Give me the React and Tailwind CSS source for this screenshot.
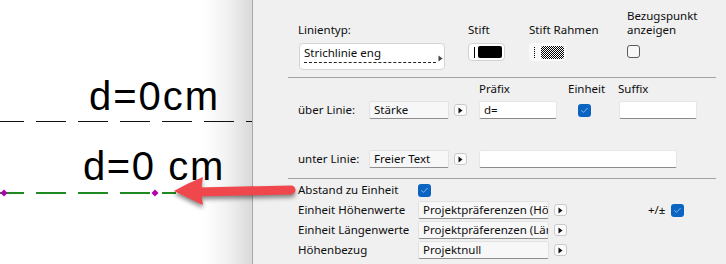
import { Check } from "lucide-react";

const ui = { fontFamily: '"Noto Sans", "Open Sans", sans-serif' };
const cad = { fontFamily: '"Liberation Sans", Arial, sans-serif' };

function ArrowBtn() {
  return (
    <div className="w-[13px] h-[12px] shrink-0 rounded-[3px] border border-[#c9c9c9] bg-[#fbfbfb] flex items-center justify-center">
      <svg width="5" height="7" viewBox="0 0 5 7">
        <path d="M0.5 0.5 L4.5 3.5 L0.5 6.5 Z" fill="#111" />
      </svg>
    </div>
  );
}

function CheckOn() {
  return (
    <div className="w-[13px] h-[13px] shrink-0 rounded-[3px] bg-[#0a64c2] flex items-center justify-center">
      <Check size={9} strokeWidth={1.6} color="#dbe9f8" />
    </div>
  );
}

function CheckOff() {
  return <div className="w-[13px] h-[13px] rounded-[3px] border border-[#5a5a5a] bg-[#f7f7f7]" />;
}

function Field({ text, w = "w-[80px]" }) {
  return (
    <div
      className={`${w} h-[18px] shrink-0 overflow-hidden whitespace-nowrap rounded-[2px] border border-[#e2e2e2] border-b-[#8d8d8d] bg-[#f7f7f7] pl-[4px] leading-[16px]`}
    >
      {text}
    </div>
  );
}

function Input({ text = "", w }) {
  return (
    <div
      className={`${w} h-[18px] shrink-0 rounded-[2px] border border-[#e6e6e6] border-b-[#8a8a8a] bg-white pl-[4px] leading-[16px]`}
    >
      {text}
    </div>
  );
}

export default function App() {
  return (
    <div className="relative flex w-[726px] h-[264px] overflow-hidden bg-white">
      {/* drawing canvas */}
      <div className="relative w-[252px] h-full shrink-0 bg-white" style={cad}>
        <div className="absolute right-0 top-0 h-full w-[48px] bg-linear-to-r from-white via-[#f1f1f1] to-[#d9d9d9]" />
        <svg className="absolute inset-0" width="252" height="264">
          <line x1="-6" y1="121.5" x2="252" y2="121.5" stroke="#111" strokeWidth="1" strokeDasharray="30 12" />
          <line x1="-6" y1="193" x2="176" y2="193" stroke="#1f8a1f" strokeWidth="2" strokeDasharray="30 12" />
          <path d="M4 189.5 L7.5 193 L4 196.5 L0.5 193 Z" fill="#b000b0" />
          <path d="M155 189.5 L158.5 193 L155 196.5 L151.5 193 Z" fill="#b000b0" />
        </svg>
        <div className="absolute left-[89px] top-[76px] text-[40px] leading-[40px] tracking-[2px] text-black">
          d=0cm
        </div>
        <div className="absolute left-[83px] top-[146px] text-[40px] leading-[40px] tracking-[1.6px] whitespace-pre text-black">
          d=0 cm
        </div>
      </div>

      {/* dialog panel */}
      <div className="flex-1 h-full border-l border-[#a9a9a9] bg-[#f0f0f0] text-[11.5px] text-[#0d0d0d]" style={ui}>
        {/* line type */}
        <div className="h-[77px] pl-[45px] pt-[9px]">
          <div className="grid grid-cols-[170px_61px_98px_auto] items-end leading-[14px]">
            <div>Linientyp:</div>
            <div>Stift</div>
            <div>Stift Rahmen</div>
            <div>
              Bezugspunkt
              <br />
              anzeigen
            </div>
          </div>
          <div className="mt-[6px] grid grid-cols-[170px_61px_98px_auto] items-start">
            <div className="ml-[1px] w-[146px] h-[27px] rounded-[4px] border border-[#d4d4d4] bg-white relative">
              <div className="pl-[4px] pt-[1px] leading-[16px]">Strichlinie eng</div>
              <div className="ml-[4px] mt-[1px] w-[132px] border-t border-dashed border-[#222]" />
              <svg className="absolute right-[1px] top-[11px]" width="5" height="7" viewBox="0 0 5 7">
                <path d="M0.5 0.5 L4.5 3.5 L0.5 6.5 Z" fill="#444" />
              </svg>
            </div>
            <div className="w-[37px] h-[18px] rounded-[4px] border border-[#d2d2d2] bg-white flex items-center pl-[5px] gap-[3px]">
              <div className="w-px h-[11px] bg-black" />
              <div className="w-[24px] h-[12px] rounded-[2px] bg-black" />
            </div>
            <div className="w-[37px] h-[18px] rounded-[4px] bg-[#f9f9f9] flex items-center pl-[5px] gap-[6px]">
              <div className="h-[11px] border-l border-dotted border-black" />
              <svg width="23" height="13">
                <defs>
                  <pattern id="chk" width="2" height="2" patternUnits="userSpaceOnUse">
                    <rect width="2" height="2" fill="#fff" />
                    <rect width="1" height="1" fill="#000" />
                    <rect x="1" y="1" width="1" height="1" fill="#000" />
                  </pattern>
                </defs>
                <rect width="23" height="13" rx="2" fill="url(#chk)" />
              </svg>
            </div>
            <div className="mt-[2px]">
              <CheckOff />
            </div>
          </div>
        </div>

        <div className="ml-[35px] mr-[10px] h-px bg-[#a3a3a3]" />

        {/* labels above / below line */}
        <div className="h-[100px] pl-[45px] pt-[4px]">
          <div className="flex h-[14px] leading-[14px]">
            <div className="w-[181px]" />
            <div className="w-[89px]">Präfix</div>
            <div className="w-[50px]">Einheit</div>
            <div>Suffix</div>
          </div>
          <div className="mt-[5px] flex items-center h-[18px]">
            <div className="w-[71px]">über Linie:</div>
            <Field text="Stärke" />
            <div className="ml-[5px]">
              <ArrowBtn />
            </div>
            <div className="ml-[12px]">
              <Input text="d=" w="w-[78px]" />
            </div>
            <div className="ml-[21px]">
              <CheckOn />
            </div>
            <div className="ml-[28px]">
              <Input w="w-[78px]" />
            </div>
          </div>
          <div className="mt-[31px] flex items-center h-[18px]">
            <div className="w-[71px]">unter Linie:</div>
            <Field text="Freier Text" />
            <div className="ml-[5px]">
              <ArrowBtn />
            </div>
            <div className="ml-[12px]">
              <Input w="w-[198px]" />
            </div>
          </div>
        </div>

        <div className="ml-[35px] mr-[10px] h-px bg-[#a3a3a3]" />

        {/* unit settings */}
        <div className="pl-[45px] pt-[4px]">
          <div className="flex items-center h-[14px]">
            <div className="w-[120px]">Abstand zu Einheit</div>
            <CheckOn />
          </div>
          <div className="mt-[4px] flex flex-col gap-[2px]">
            <div className="flex items-center h-[18px]">
              <div className="w-[120px]">Einheit Höhenwerte</div>
              <Field text="Projektpräferenzen (Höhenwerte)" w="w-[131px]" />
              <div className="ml-[5px]">
                <ArrowBtn />
              </div>
              <div className="ml-[81px]">+/±</div>
              <div className="ml-[6px]">
                <CheckOn />
              </div>
            </div>
            <div className="flex items-center h-[18px]">
              <div className="w-[120px]">Einheit Längenwerte</div>
              <Field text="Projektpräferenzen (Längenwerte)" w="w-[131px]" />
              <div className="ml-[5px]">
                <ArrowBtn />
              </div>
            </div>
            <div className="flex items-center h-[18px]">
              <div className="w-[120px]">Höhenbezug</div>
              <Field text="Projektnull" w="w-[131px]" />
              <div className="ml-[5px]">
                <ArrowBtn />
              </div>
            </div>
          </div>
        </div>
      </div>

      {/* red annotation arrow */}
      <svg
        className="pointer-events-none absolute inset-0 drop-shadow-[0_3px_2px_rgba(0,0,0,0.45)]"
        width="726"
        height="264"
      >
        <line x1="198" y1="192" x2="291" y2="190" stroke="#ef474b" strokeWidth="9" strokeLinecap="round" />
        <path d="M174 191 Q188 183 203 177 Q200 191 203 205 Q188 198 174 191 Z" fill="#ef474b" />
      </svg>
    </div>
  );
}
